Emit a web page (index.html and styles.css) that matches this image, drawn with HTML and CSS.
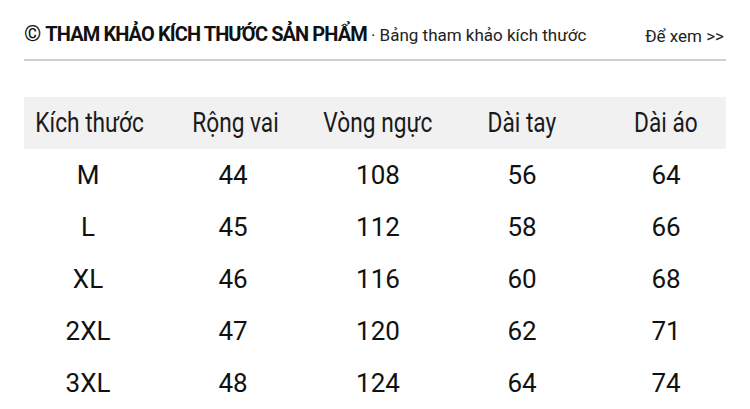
FILE: index.html
```html
<!DOCTYPE html>
<html lang="vi">
<head>
<meta charset="utf-8">
<link rel="stylesheet" href="styles.css">
</head>
<body>
<div class="page">
  <div class="head">
    <div class="title">
      <span class="copy">©</span>
      <span class="main">THAM KHẢO KÍCH THƯỚC SẢN PHẨM</span>
      <span class="sub">· Bảng tham khảo kích thước</span>
    </div>
    <div class="more">Để xem &gt;&gt;</div>
  </div>
  <div class="table">
    <div class="row hdr">
      <div><span>Kích thước</span></div><div><span>Rộng vai</span></div><div><span>Vòng ngực</span></div><div><span>Dài tay</span></div><div><span>Dài áo</span></div>
    </div>
    <div class="row"><div>M</div><div>44</div><div>108</div><div>56</div><div>64</div></div>
    <div class="row"><div>L</div><div>45</div><div>112</div><div>58</div><div>66</div></div>
    <div class="row"><div>XL</div><div>46</div><div>116</div><div>60</div><div>68</div></div>
    <div class="row"><div>2XL</div><div>47</div><div>120</div><div>62</div><div>71</div></div>
    <div class="row"><div>3XL</div><div>48</div><div>124</div><div>64</div><div>74</div></div>
  </div>
</div>
</body>
</html>
```
FILE: styles.css
```css
html, body {
  margin: 0;
  padding: 0;
  background: #ffffff;
}
body {
  font-family: Roboto, "Noto Sans", sans-serif;
  color: #111111;
}
.page {
  padding: 0 24px;
}
.head {
  display: flex;
  justify-content: space-between;
  align-items: flex-end;
  height: 61px;
  border-bottom: 2px solid #cfcfcf;
  box-sizing: border-box;
  padding-bottom: 13px;
}
.title {
  display: flex;
  align-items: baseline;
  white-space: nowrap;
}
.copy {
  font-size: 22px;
  margin-right: 4px;
  line-height: 1;
}
.main {
  font-weight: 700;
  font-size: 20px;
  letter-spacing: -0.9px;
  margin-right: 4px;
}
.sub {
  font-size: 17px;
  color: #222;
}
.more {
  font-size: 17px;
  color: #222;
  white-space: nowrap;
  padding-right: 2px;
}
.table {
  margin-top: 36px;
}
.row {
  display: grid;
  grid-template-columns: 132px 154px 136px 152px 128px;
  height: 52px;
  align-items: center;
  font-size: 26px;
}
.row > div {
  text-align: center;
}
.row > div:last-child {
  padding-left: 8px;
}
.row > div:first-child {
  padding-right: 4px;
}
.hdr {
  background: #f1f1f1;
  color: #1a1a1a;
  font-size: 27px;
}
.hdr span {
  display: inline-block;
  transform: scaleX(0.84);
  white-space: nowrap;
}
.hdr > div:first-child {
  padding-right: 0;
}
.hdr > div:nth-child(2) {
  padding-left: 4px;
}
```
